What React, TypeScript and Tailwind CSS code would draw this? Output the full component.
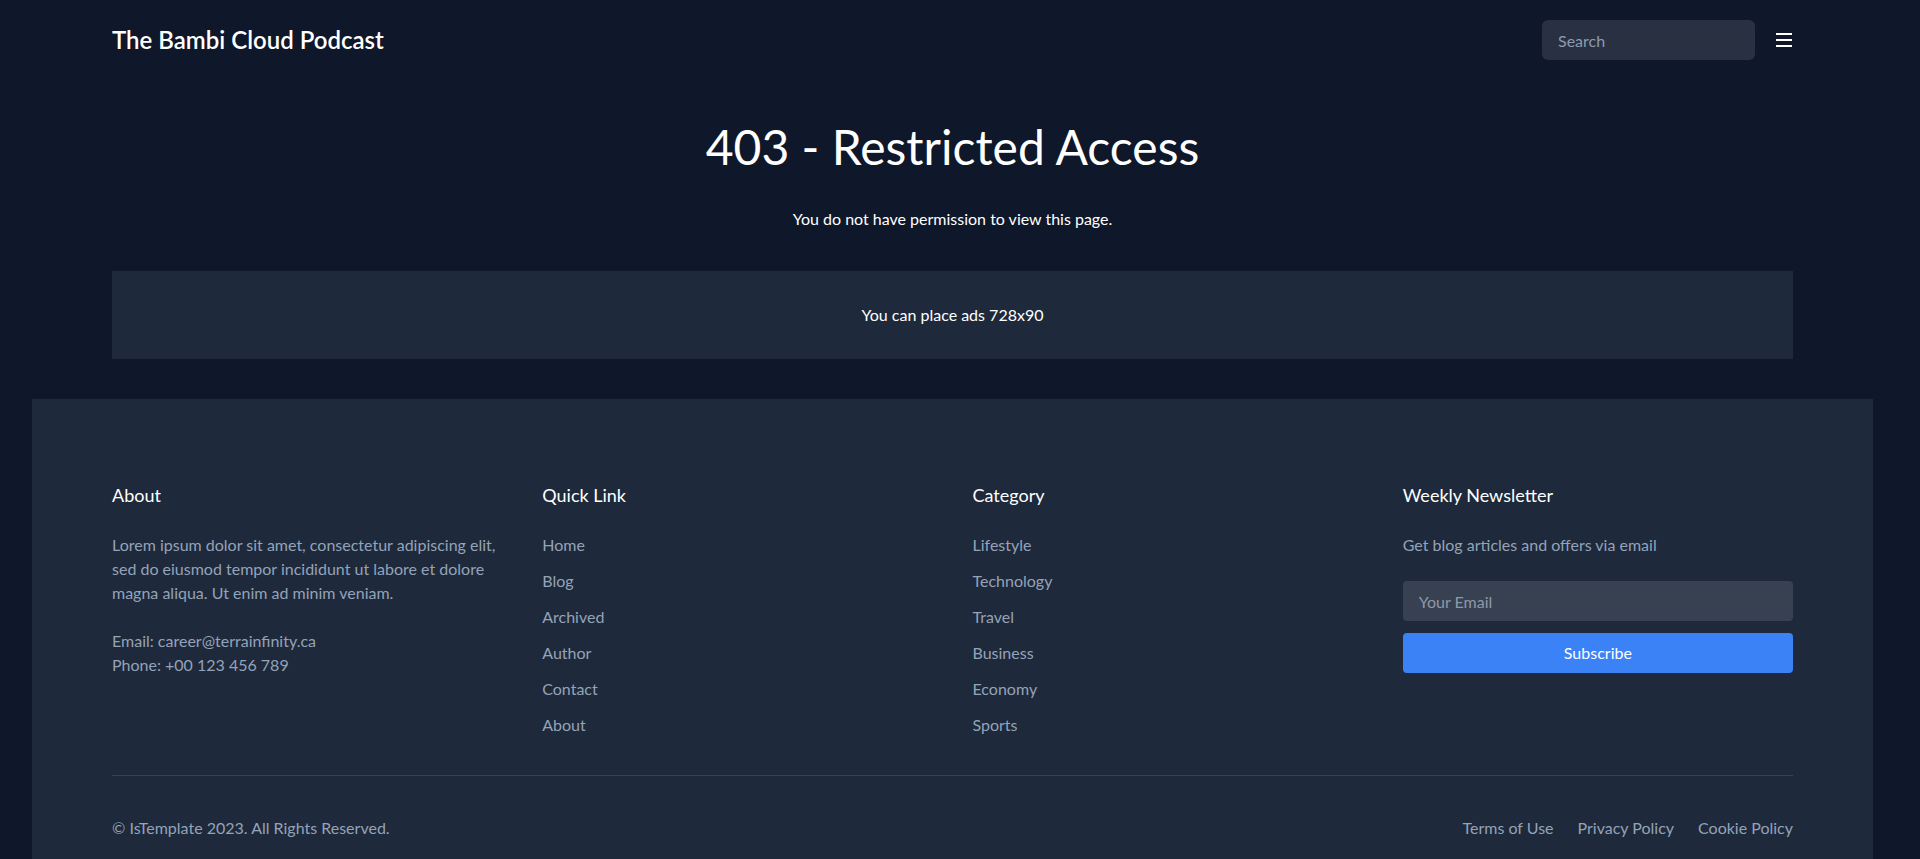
import { useState } from 'react';

const quickLinks = ['Home', 'Blog', 'Archived', 'Author', 'Contact', 'About'];
const categories = ['Lifestyle', 'Technology', 'Travel', 'Business', 'Economy', 'Sports'];
const legalLinks = ['Terms of Use', 'Privacy Policy', 'Cookie Policy'];

const MenuIcon = () => (
  <svg width="18" height="18" viewBox="0 0 18 18" fill="none" stroke="currentColor" strokeWidth="2">
    <line x1="1" y1="3" x2="17" y2="3" />
    <line x1="1" y1="9" x2="17" y2="9" />
    <line x1="1" y1="15" x2="17" y2="15" />
  </svg>
);

export default function App() {
  const [query, setQuery] = useState('');
  const [email, setEmail] = useState('');

  return (
    <div className="min-h-screen bg-[#0f172a] pr-[15px] font-['Lato','Noto_Sans',sans-serif] text-white">
      <div className="px-8">
        <header className="flex h-20 items-center justify-between px-20">
          <h2 className="text-2xl font-semibold">The Bambi Cloud Podcast</h2>
          <div className="flex items-center gap-5">
            <input
              type="text"
              value={query}
              onChange={(e) => setQuery(e.target.value)}
              placeholder="Search"
              className="h-10 w-[213px] rounded-md bg-[#283041] px-4 text-base text-white placeholder-[#8d9bb0] focus:outline-none"
            />
            <button className="text-white">
              <MenuIcon />
            </button>
          </div>
        </header>

        <main className="px-20 pt-[43px]">
          <h1 className="text-center text-5xl">403 - Restricted Access</h1>
          <p className="mt-9 text-center text-base">You do not have permission to view this page.</p>
          <div className="mt-10 bg-[#1e293b] py-8 text-center text-base">You can place ads 728x90</div>
        </main>

        <footer className="mt-10 bg-[#1e293b] px-20 pb-10 pt-20">
          <div className="grid grid-cols-4 gap-10 pt-0.5">
            <div>
              <h3 className="mb-6 text-lg">About</h3>
              <p className="text-base leading-6 text-[#94a3b8]">
                Lorem ipsum dolor sit amet, consectetur adipiscing elit,
                <br />
                sed do eiusmod tempor incididunt ut labore et dolore
                <br />
                magna aliqua. Ut enim ad minim veniam.
              </p>
              <p className="mt-6 text-base leading-6 text-[#94a3b8]">
                Email: career@terrainfinity.ca
                <br />
                Phone: +00 123 456 789
              </p>
            </div>

            <div>
              <h3 className="mb-6 text-lg">Quick Link</h3>
              <ul className="space-y-3 text-base text-[#94a3b8]">
                {quickLinks.map((link) => (
                  <li key={link}>
                    <a href="#">{link}</a>
                  </li>
                ))}
              </ul>
            </div>

            <div>
              <h3 className="mb-6 text-lg">Category</h3>
              <ul className="space-y-3 text-base text-[#94a3b8]">
                {categories.map((cat) => (
                  <li key={cat}>
                    <a href="#">{cat}</a>
                  </li>
                ))}
              </ul>
            </div>

            <div>
              <h3 className="mb-6 text-lg">Weekly Newsletter</h3>
              <p className="mb-6 text-base text-[#94a3b8]">Get blog articles and offers via email</p>
              <input
                type="email"
                value={email}
                onChange={(e) => setEmail(e.target.value)}
                placeholder="Your Email"
                className="mb-3 h-10 w-full rounded bg-[#374151] px-4 text-base text-white placeholder-[#8d99a8] focus:outline-none"
              />
              <button className="h-10 w-full rounded bg-[#3b82f6] text-base text-white">Subscribe</button>
            </div>
          </div>

          <div className="mt-[38px] flex items-center justify-between border-t border-[#374151] pt-10 text-base text-[#94a3b8]">
            <span>© IsTemplate 2023. All Rights Reserved.</span>
            <div className="flex gap-6">
              {legalLinks.map((link) => (
                <a key={link} href="#">
                  {link}
                </a>
              ))}
            </div>
          </div>
        </footer>
      </div>
    </div>
  );
}
